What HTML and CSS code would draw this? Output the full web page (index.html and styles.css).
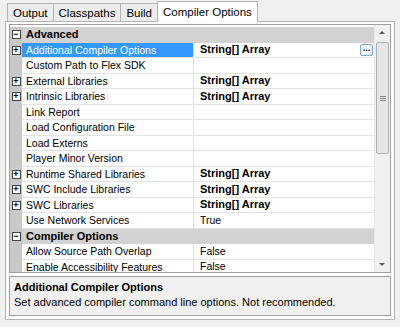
FILE: index.html
```html
<!DOCTYPE html>
<html>
<head>
<meta charset="utf-8">
<link rel="stylesheet" href="styles.css">
</head>
<body>
<div class="tabs">
  <div class="tab first">Output</div>
  <div class="tab">Classpaths</div>
  <div class="tab">Build</div>
  <div class="tab active">Compiler Options</div>
</div>
<div class="panel">
  <div class="grid">
    <div class="rows">
      <div class="row cat"><span class="gut"><span class="box">−</span></span><span class="name">Advanced</span><span class="val"></span></div>
      <div class="row sel"><span class="gut"><span class="box">+</span></span><span class="name">Additional Compiler Options</span><span class="val"><b>String[] Array</b><span class="dots">...</span></span></div>
      <div class="row"><span class="gut"></span><span class="name">Custom Path to Flex SDK</span><span class="val"></span></div>
      <div class="row"><span class="gut"><span class="box">+</span></span><span class="name">External Libraries</span><span class="val"><b>String[] Array</b></span></div>
      <div class="row"><span class="gut"><span class="box">+</span></span><span class="name">Intrinsic Libraries</span><span class="val"><b>String[] Array</b></span></div>
      <div class="row"><span class="gut"></span><span class="name">Link Report</span><span class="val"></span></div>
      <div class="row"><span class="gut"></span><span class="name">Load Configuration File</span><span class="val"></span></div>
      <div class="row"><span class="gut"></span><span class="name">Load Externs</span><span class="val"></span></div>
      <div class="row"><span class="gut"></span><span class="name">Player Minor Version</span><span class="val"></span></div>
      <div class="row"><span class="gut"><span class="box">+</span></span><span class="name">Runtime Shared Libraries</span><span class="val"><b>String[] Array</b></span></div>
      <div class="row"><span class="gut"><span class="box">+</span></span><span class="name">SWC Include Libraries</span><span class="val"><b>String[] Array</b></span></div>
      <div class="row"><span class="gut"><span class="box">+</span></span><span class="name">SWC Libraries</span><span class="val"><b>String[] Array</b></span></div>
      <div class="row"><span class="gut"></span><span class="name">Use Network Services</span><span class="val">True</span></div>
      <div class="row cat"><span class="gut"><span class="box">−</span></span><span class="name">Compiler Options</span><span class="val"></span></div>
      <div class="row"><span class="gut"></span><span class="name">Allow Source Path Overlap</span><span class="val">False</span></div>
      <div class="row"><span class="gut"></span><span class="name">Enable Accessibility Features</span><span class="val">False</span></div>
    </div>
    <div class="sbar">
      <div class="arrow up"></div>
      <div class="track"><div class="thumb"><span class="grip"></span></div></div>
      <div class="arrow down"></div>
    </div>
  </div>
  <div class="desc">
    <div class="dtitle">Additional Compiler Options</div>
    <div class="dtext">Set advanced compiler command line options. Not recommended.</div>
  </div>
</div>
</body>
</html>
```
FILE: styles.css
```css
html, body { margin: 0; padding: 0; }
body {
  width: 400px; height: 327px; overflow: hidden;
  background: #f0f0f0;
  font-family: "Liberation Sans", Arial, sans-serif;
  font-size: 10.5px;
  color: #000;
}
.tabs {
  display: flex; align-items: flex-end;
  height: 21px; padding-left: 7px; box-sizing: border-box;
}
.tab {
  height: 18px; line-height: 18px; box-sizing: border-box;
  padding: 0 5px; font-size: 11.5px;
  border: 1px solid #b4b4b4; border-bottom: none; border-right: none;
  background: #ececec;
}
.tab.active {
  height: 21px; line-height: 21px; background: #fff;
  border-right: 1px solid #b4b4b4; padding: 0 5px; margin-bottom: -1px;
  position: relative; z-index: 1;
}
.panel {
  margin: 0 5px; height: 299px; box-sizing: border-box;
  border: 1px solid #b4b4b4; background: #fcfcfc;
  padding: 2px 3px 3px 3px;
  display: flex; flex-direction: column; gap: 3px;
}
.grid {
  height: 249px; box-sizing: border-box;
  border: 1px solid #a0a0a0; display: flex; background: #fff;
  overflow: hidden;
}
.rows { flex: 1; overflow: hidden; padding-top: 2px; }
.row {
  display: flex; height: 15.5px; line-height: 15px; box-sizing: border-box;
  white-space: nowrap;
}
.gut {
  width: 12px; flex: none; background: #c9c9c9;
  display: flex; align-items: center; justify-content: center;
}
.box {
  width: 7px; height: 7px; border: 1px solid #444; background: #fff;
  font-size: 9px; line-height: 6px; text-align: center; font-weight: bold;
  box-sizing: content-box; color: #000; overflow: hidden;
}
.name {
  width: 172px; flex: none; padding-left: 4px; box-sizing: border-box;
  border-bottom: 1px solid #e2e2e2; border-right: 1px solid #e2e2e2;
  overflow: hidden;
}
.val {
  flex: 1; padding-left: 6px; border-bottom: 1px solid #e2e2e2;
  display: flex; align-items: center; overflow: hidden;
}
.val b { flex: 1; font-size: 11px; }
.row.cat .name, .row.cat .val { background: #d2d2d2; font-weight: bold; border-color: #d2d2d2; font-size: 11px; }
.row.sel .name { background: #3399ff; color: #fff; }
.dots {
  width: 13px; height: 12px; margin-right: 1px; box-sizing: border-box;
  border: 1px solid #7aa7d6; border-radius: 2px; background: #eef4fb;
  font-size: 9px; line-height: 6px; text-align: center; font-weight: bold; color: #222;
}
.sbar {
  width: 16px; flex: none; background: #f0f0f0; border-left: 1px solid #e8e8e8;
  display: flex; flex-direction: column; box-sizing: border-box;
}
.arrow { height: 16px; flex: none; position: relative; }
.arrow::after {
  content: ""; position: absolute; left: 4px; top: 6px;
  border-left: 3px solid transparent; border-right: 3px solid transparent;
}
.arrow.up::after { border-bottom: 3px solid #555; }
.arrow.down::after { border-top: 3px solid #555; top: 7px; }
.track { flex: 1; padding: 1px 1px; }
.thumb {
  height: 110px; border: 1px solid #b0b0b0; background: #e6e6e6; border-radius: 2px;
  display: flex; align-items: center; justify-content: center;
}
.grip {
  width: 6px; height: 5px;
  background: linear-gradient(#888 0 1px, transparent 1px 2px, #888 2px 3px, transparent 3px 4px, #888 4px 5px);
}
.desc {
  flex: 1; border: 1px solid #a0a0a0; background: #f0f0f0;
  padding: 3px 4px; font-size: 11px;
}
.dtitle { font-weight: bold; line-height: 15px; }
.dtext { line-height: 15px; }
```
